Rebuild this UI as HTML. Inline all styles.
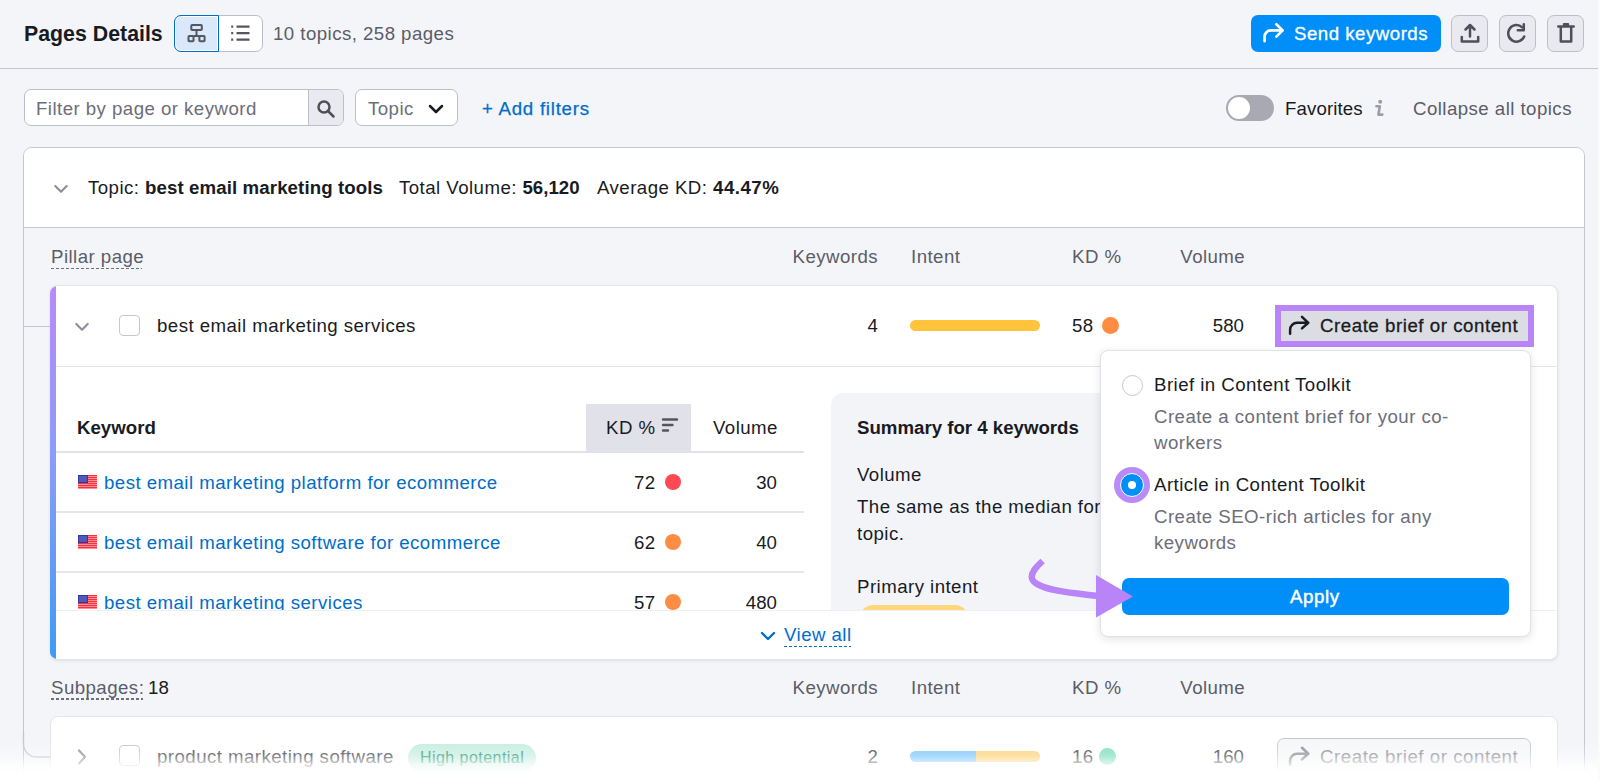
<!DOCTYPE html>
<html><head><meta charset="utf-8">
<style>
*{box-sizing:border-box;margin:0;padding:0}
html,body{width:1600px;height:780px;overflow:hidden;background:#f4f5f9}
body{position:relative;font-family:"Liberation Sans",sans-serif;color:#191b23;font-size:18.67px;line-height:26px;letter-spacing:.45px}
.a{position:absolute;white-space:nowrap}
.r{position:absolute;white-space:nowrap;text-align:right;letter-spacing:0}
.b{font-weight:700;letter-spacing:0}
.g{color:#5b5d68}
.blue{color:#006dca}
.btn{position:absolute;border:1px solid #bcbfc8;border-radius:7px;background:#e9eaef}
.dash{position:absolute;height:1.5px;background:linear-gradient(90deg,#6c6e79 60%,transparent 60%) repeat-x 0 0/5px 1.5px}
svg{position:absolute;overflow:visible}
.flag{position:absolute;width:19px;height:14px;background:repeating-linear-gradient(#f5333f 0 1.4px,#ff8d95 1.4px 2px)}
.flag:before{content:"";position:absolute;left:0;top:0;width:10px;height:7.5px;background:#5058b9;box-shadow:inset 0 0 0 1px #2d38ad}
</style></head><body>

<!-- HEADER -->
<div class="a" style="left:0;top:68px;width:1598px;height:1px;background:#c4c7cf"></div>
<div class="a b" style="left:24px;top:19px;font-size:21.33px;line-height:30px">Pages Details</div>

<!-- toggle group -->
<div class="a" style="left:174px;top:15px;width:89px;height:37px;border:1px solid #bcbfc8;border-radius:7px;background:#fff"></div>
<div class="a" style="left:174px;top:15px;width:45px;height:37px;border:1px solid #006dca;border-radius:7px 0 0 7px;background:#d9e8fa;box-shadow:inset 0 0 0 1px #fff"></div>
<svg style="left:186px;top:22px" width="22" height="22" viewBox="0 0 22 22" fill="none" stroke="#55565f" stroke-width="2">
  <rect x="5.3" y="3" width="10.5" height="5" rx="0.8"/><path d="M10.5 8v6"/>
  <rect x="2.5" y="14" width="5" height="5.2" rx="0.8"/><rect x="13.4" y="14" width="5.2" height="5.2" rx="0.8"/><path d="M7.5 14h6"/>
</svg>
<svg style="left:229px;top:22px" width="24" height="22" viewBox="0 0 24 22" fill="none" stroke="#55565f" stroke-width="2.2">
  <path d="M2.2 4.6h2M2.2 11.1h2M2.2 17.7h2M7.5 4.6h13M7.5 11.1h13M7.5 17.7h13"/>
</svg>
<div class="a g" style="left:273px;top:20.7px">10 topics, 258 pages</div>

<!-- send keywords -->
<div class="a" style="left:1251px;top:15px;width:190px;height:37px;border-radius:7px;background:#008ff8"></div>
<svg style="left:1262px;top:22px" width="24" height="22" viewBox="0 0 24 22" fill="none" stroke="#fff" stroke-width="2.7" stroke-linecap="round" stroke-linejoin="round">
  <path d="M2.6 19.2v-4.6a6.2 6.2 0 0 1 6.2-6.2h11.8M14.4 2.3l6.2 6.1-6.2 6.2"/>
</svg>
<div class="a" style="left:1294px;top:20.7px;color:#fff;letter-spacing:.5px;-webkit-text-stroke:.3px #fff">Send keywords</div>

<!-- icon buttons -->
<div class="btn" style="left:1451px;top:15px;width:37px;height:37px"></div>
<div class="btn" style="left:1499px;top:15px;width:37px;height:37px"></div>
<div class="btn" style="left:1547px;top:15px;width:37px;height:37px"></div>
<svg style="left:1459px;top:22px" width="22" height="22" viewBox="0 0 22 22" fill="none" stroke="#4d4f59" stroke-width="2.5" stroke-linecap="round" stroke-linejoin="round">
  <path d="M11 3.5v11M6.5 7.5L11 3l4.5 4.5M2.8 15v4.6h16.4V15"/>
</svg>
<svg style="left:1506px;top:22px" width="22" height="22" viewBox="0 0 22 22" fill="none" stroke="#4d4f59" stroke-width="2.5" stroke-linecap="round" stroke-linejoin="round">
  <path d="M18.2 14.5A8.3 8.3 0 1 1 16.2 5.3"/><path d="M17.8 2.3v6h-6"/>
</svg>
<svg style="left:1555px;top:22px" width="22" height="22" viewBox="0 0 22 22" fill="none" stroke="#4d4f59" stroke-width="2.5" stroke-linejoin="round" stroke-linecap="round">
  <path d="M3.3 4.5h15.4M5.8 4.5v15h10.4v-15M9 2.2h4"/>
</svg>

<!-- FILTER ROW -->
<div class="a" style="left:24px;top:89px;width:320px;height:37px;border:1px solid #bcbfc8;border-radius:7px;background:#fff;overflow:hidden">
  <div class="a" style="left:283px;top:0;width:36px;height:35px;background:#e9eaef;border-left:1px solid #bcbfc8"></div>
</div>
<svg style="left:315px;top:97.5px" width="22" height="22" viewBox="0 0 22 22" fill="none" stroke="#4d4f59" stroke-width="2.5" stroke-linecap="round">
  <circle cx="9" cy="9" r="5.5"/><path d="M13 13l5.5 5.5"/>
</svg>
<div class="a" style="left:36px;top:96px;color:#6c6e79">Filter by page or keyword</div>

<div class="a" style="left:355px;top:89px;width:103px;height:37px;border:1px solid #bcbfc8;border-radius:7px;background:#fff"></div>
<div class="a" style="left:368px;top:96px;color:#6c6e79">Topic</div>
<svg style="left:428px;top:102px" width="16" height="14" viewBox="0 0 16 14" fill="none" stroke="#191b23" stroke-width="2.5" stroke-linecap="round" stroke-linejoin="round">
  <path d="M2 4l6 6 6-6"/>
</svg>
<div class="a blue" style="left:482px;top:96px;letter-spacing:.75px;-webkit-text-stroke:.25px #006dca">+ Add filters</div>

<div class="a" style="left:1226px;top:95px;width:48px;height:26px;border-radius:13px;background:#a8a9b3"></div>
<div class="a" style="left:1228px;top:97px;width:22px;height:22px;border-radius:11px;background:#fff"></div>
<div class="a" style="left:1285px;top:96px;letter-spacing:.1px">Favorites</div>
<svg style="left:1365px;top:95px" width="30" height="30" viewBox="0 0 30 30" fill="none" stroke="#9a9ca6" stroke-width="2.6" stroke-linecap="round" stroke-linejoin="round">
  <circle cx="15.2" cy="6.7" r="1.1" fill="#9a9ca6" stroke-width="1.8"/><path d="M11.4 11.3h3.4l-1.4 8.3h3.9"/>
</svg>
<div class="a g" style="left:1413px;top:96px">Collapse all topics</div>

<!-- TOPIC CARD -->
<div class="a" style="left:23px;top:147px;width:1562px;height:700px;border:1px solid #c4c7cf;border-radius:9px;background:#f4f5f9"></div>
<div class="a" style="left:24px;top:148px;width:1560px;height:80px;border-radius:8px 8px 0 0;background:#fff;border-bottom:1px solid #c4c7cf"></div>
<svg style="left:52px;top:182px" width="18" height="14" viewBox="0 0 18 14" fill="none" stroke="#8e909a" stroke-width="2.2" stroke-linecap="round" stroke-linejoin="round">
  <path d="M3.3 4l5.7 5.7 5.7-5.7"/>
</svg>
<div class="a" style="left:88px;top:175px">Topic: <span class="b" style="letter-spacing:.1px">best email marketing tools</span></div>
<div class="a" style="left:399px;top:175px">Total Volume: <span class="b">56,120</span></div>
<div class="a" style="left:597px;top:175px">Average KD: <span class="b" style="letter-spacing:.5px">44.47%</span></div>

<!-- PILLAR HEADER -->
<div class="a g" style="left:51px;top:244px">Pillar page</div>
<div class="dash" style="left:51px;top:267.5px;width:91px"></div>
<div class="r g" style="right:722px;top:244px;letter-spacing:.45px">Keywords</div>
<div class="a g" style="left:911px;top:244px">Intent</div>
<div class="a g" style="left:1072px;top:244px">KD %</div>
<div class="r g" style="right:355px;top:244px;letter-spacing:.4px">Volume</div>

<!-- connector -->
<div class="a" style="left:24px;top:326px;width:27px;height:1px;background:#c4c7cf"></div>

<!-- PILLAR CARD -->
<div class="a" style="left:50px;top:285px;width:1508px;height:375px;border-radius:8px;background:#fff;border:1px solid #e4e5eb;border-left:0;box-shadow:0 1px 3px rgba(25,27,35,.10);overflow:hidden">
  <div class="a" style="left:0;top:-1px;width:6px;height:375px;background:linear-gradient(#b98af8 0%,#8c9cf8 45%,#3d9bf6 100%)"></div>
  <div class="a" style="left:6px;top:80px;width:1503px;height:1px;background:#e4e5eb"></div>
</div>
<svg style="left:73px;top:320px" width="18" height="14" viewBox="0 0 18 14" fill="none" stroke="#8e909a" stroke-width="2.2" stroke-linecap="round" stroke-linejoin="round">
  <path d="M3.3 4l5.7 5.7 5.7-5.7"/>
</svg>
<div class="a" style="left:119px;top:315px;width:21px;height:21px;border:1.5px solid #c4c7cf;border-radius:4px;background:#fff"></div>
<div class="a" style="left:157px;top:313px">best email marketing services</div>
<div class="r" style="right:722px;top:313px">4</div>
<div class="a" style="left:910px;top:320px;width:130px;height:11px;border-radius:6px;background:#ffc43c"></div>
<div class="a" style="left:1072px;top:313px">58</div>
<div class="a" style="left:1102px;top:317px;width:17px;height:17px;border-radius:50%;background:#ff8c43"></div>
<div class="r" style="right:356px;top:313px">580</div>

<!-- create brief highlighted -->
<div class="a" style="left:1275px;top:305px;width:259px;height:42px;background:#b884f7"></div>
<div class="a" style="left:1281px;top:311px;width:247px;height:30px;background:#dcdde2"></div>
<svg style="left:1286px;top:314px" width="24" height="22" viewBox="0 0 24 22" fill="none" stroke="#191b23" stroke-width="2.5" stroke-linecap="round" stroke-linejoin="round">
  <path d="M4.1 19.8V15.8a7 7 0 0 1 7-7H22.3M16 2.8l6.3 6-6.3 5.6"/>
</svg>
<div class="a" style="left:1320px;top:313px;letter-spacing:.55px;-webkit-text-stroke:.3px #191b23">Create brief or content</div>

<!-- EXPANDED: keyword table -->
<div class="a" style="left:586px;top:404px;width:105px;height:48px;background:#e0e1e9"></div>
<div class="a" style="left:56px;top:451px;width:748px;height:1.5px;background:#e0e1e9"></div>
<div class="a" style="left:56px;top:511px;width:748px;height:1.5px;background:#e6e7ed"></div>
<div class="a" style="left:56px;top:571px;width:748px;height:1.5px;background:#e6e7ed"></div>
<div class="a b" style="left:77px;top:415px">Keyword</div>
<div class="a" style="left:606px;top:415px">KD %</div>
<svg style="left:660px;top:416px" width="20" height="18" viewBox="0 0 20 18" fill="none" stroke="#55565f" stroke-width="2.4" stroke-linecap="round">
  <path d="M3 3.5h14M3 9h9.5M3 14.5h5"/>
</svg>
<div class="a" style="left:713px;top:415px">Volume</div>

<div class="a" style="left:56px;top:452px;width:760px;height:158px;overflow:hidden">
  <div class="flag" style="left:22px;top:23px"></div>
  <div class="a blue" style="left:48px;top:18px">best email marketing platform for ecommerce</div>
  <div class="a" style="left:578px;top:18px">72</div>
  <div class="a" style="left:609px;top:22px;width:16px;height:16px;border-radius:50%;background:#ff4953"></div>
  <div class="r" style="right:39px;top:18px">30</div>

  <div class="flag" style="left:22px;top:83px"></div>
  <div class="a blue" style="left:48px;top:78px">best email marketing software for ecommerce</div>
  <div class="a" style="left:578px;top:78px">62</div>
  <div class="a" style="left:609px;top:82px;width:16px;height:16px;border-radius:50%;background:#ff8c43"></div>
  <div class="r" style="right:39px;top:78px">40</div>

  <div class="flag" style="left:22px;top:143px"></div>
  <div class="a blue" style="left:48px;top:138px">best email marketing services</div>
  <div class="a" style="left:578px;top:138px">57</div>
  <div class="a" style="left:609px;top:142px;width:16px;height:16px;border-radius:50%;background:#ff8c43"></div>
  <div class="r" style="right:39px;top:138px">480</div>
</div>

<!-- summary panel -->
<div class="a" style="left:831px;top:393px;width:400px;height:217px;border-radius:12px 12px 0 0;background:#f3f4f8;overflow:hidden">
  <div class="a b" style="left:26px;top:22px">Summary for 4 keywords</div>
  <div class="a" style="left:26px;top:69px">Volume</div>
  <div class="a" style="left:26px;top:101px;line-height:26.5px">The same as the median for this<br>topic.</div>
  <div class="a" style="left:26px;top:181px">Primary intent</div>
  <div class="a" style="left:29px;top:212px;width:108px;height:26px;border-radius:13px;background:#fdd77a"></div>
</div>

<!-- footer view all -->
<div class="a" style="left:56px;top:611px;width:1501px;height:47px;background:#fff;border-radius:0 0 8px 0;box-shadow:0 -1px 0 #eeeff3"></div>
<svg style="left:759px;top:629px" width="18" height="14" viewBox="0 0 18 14" fill="none" stroke="#006dca" stroke-width="2.4" stroke-linecap="round" stroke-linejoin="round">
  <path d="M3 4l6 6 6-6"/>
</svg>
<div class="a blue" style="left:784px;top:622px">View all</div>
<div class="dash" style="left:784px;top:645.5px;width:67px;background-image:linear-gradient(90deg,#006dca 60%,transparent 60%)"></div>

<!-- SUBPAGES -->
<div class="a g" style="left:51px;top:675px">Subpages:</div>
<div class="dash" style="left:51px;top:698.3px;width:92px"></div>
<div class="a" style="left:148px;top:675px;letter-spacing:.2px">18</div>
<div class="r g" style="right:722px;top:675px;letter-spacing:.45px">Keywords</div>
<div class="a g" style="left:911px;top:675px">Intent</div>
<div class="a g" style="left:1072px;top:675px">KD %</div>
<div class="r g" style="right:355px;top:675px;letter-spacing:.4px">Volume</div>

<svg style="left:23px;top:731.5px" width="30" height="30" viewBox="0 0 30 30" fill="none" stroke="#c4c7cf" stroke-width="1.4">
  <path d="M0.5 0v12a13 13 0 0 0 13 13h14"/>
</svg>

<div class="a" style="left:50px;top:716px;width:1508px;height:120px;border-radius:8px;background:#fff;border:1px solid #e4e5eb"></div>
<svg style="left:75px;top:748px" width="14" height="18" viewBox="0 0 14 18" fill="none" stroke="#8e909a" stroke-width="2.2" stroke-linecap="round" stroke-linejoin="round">
  <path d="M4 2.5l6 6.5-6 6.5"/>
</svg>
<div class="a" style="left:119px;top:745px;width:21px;height:21px;border:1.5px solid #c4c7cf;border-radius:4px;background:#fff"></div>
<div class="a" style="left:157px;top:744px;color:#45474f">product marketing software</div>
<div class="a" style="left:408px;top:744px;width:128px;height:28px;border-radius:14px;background:#c6eee0"></div>
<div class="a" style="left:420px;top:745px;color:#2a9872;font-size:16px;letter-spacing:.45px">High potential</div>
<div class="r" style="right:722px;top:744px;color:#45474f">2</div>
<div class="a" style="left:910px;top:751px;width:66px;height:11px;border-radius:6px 0 0 6px;background:#7ec6fb"></div>
<div class="a" style="left:976px;top:751px;width:64px;height:11px;border-radius:0 6px 6px 0;background:#fcd27a"></div>
<div class="a" style="left:1072px;top:744px;color:#45474f">16</div>
<div class="a" style="left:1099px;top:748px;width:17px;height:17px;border-radius:50%;background:#7fdfba"></div>
<div class="r" style="right:356px;top:744px;color:#45474f">160</div>
<div class="a" style="left:1277px;top:738px;width:254px;height:40px;border:1px solid #c4c7cf;border-radius:7px;background:#f6f7f9"></div>
<svg style="left:1286px;top:745px" width="24" height="22" viewBox="0 0 24 22" fill="none" stroke="#8e909a" stroke-width="2.6" stroke-linecap="round" stroke-linejoin="round">
  <path d="M4.1 19.8V15.8a7 7 0 0 1 7-7H22.3M16 2.8l6.3 6-6.3 5.6"/>
</svg>
<div class="a" style="left:1320px;top:744px;color:#8e909a;letter-spacing:.55px">Create brief or content</div>

<!-- DROPDOWN -->
<div class="a" style="left:1100px;top:350px;width:431px;height:287px;border:1px solid #e0e1e9;border-radius:8px;background:#fff;box-shadow:0 2px 8px rgba(25,27,35,.12)"></div>
<div class="a" style="left:1122px;top:375px;width:21px;height:21px;border:1.5px solid #c4c7cf;border-radius:50%;background:#fff"></div>
<div class="a" style="left:1154px;top:372px">Brief in Content Toolkit</div>
<div class="a" style="left:1154px;top:404px;color:#6c6e79;line-height:26px">Create a content brief for your co-<br>workers</div>
<div class="a" style="left:1114px;top:467px;width:36px;height:36px;border-radius:50%;background:#b98af8"></div>
<div class="a" style="left:1120px;top:473px;width:24px;height:24px;border-radius:50%;background:#008ff8;border:1px solid #fff"></div>
<div class="a" style="left:1128px;top:481px;width:8px;height:8px;border-radius:50%;background:#fff"></div>
<div class="a" style="left:1154px;top:472px">Article in Content Toolkit</div>
<div class="a" style="left:1154px;top:504px;color:#6c6e79;line-height:26px">Create SEO-rich articles for any<br>keywords</div>
<div class="a" style="left:1122px;top:578px;width:387px;height:37px;border-radius:7px;background:#008ff8"></div>
<div class="a" style="left:1290px;top:584px;color:#fff;letter-spacing:.6px;-webkit-text-stroke:.45px #fff">Apply</div>

<!-- purple arrow -->
<svg style="left:1020px;top:550px" width="120" height="75" viewBox="0 0 120 75" fill="none">
  <path d="M22.6 11C15 18 11.7 22 11.7 27C11.7 35 30 40 48 42.3C58 43.5 70 45.5 80 46" stroke="#b884f7" stroke-width="6.4"/>
  <path d="M76 25L113 46.5L76 67.5Z" fill="#b884f7"/>
</svg>

<!-- bottom fade -->
<div class="a" style="left:0;top:740px;width:1600px;height:40px;background:linear-gradient(rgba(255,255,255,0),rgba(255,255,255,.3) 38%,rgba(255,255,255,.75) 62%,#fff 80%)"></div>

<div class="a" style="left:1598px;top:0;width:2px;height:780px;background:#fbfbfc"></div>
</body></html>
